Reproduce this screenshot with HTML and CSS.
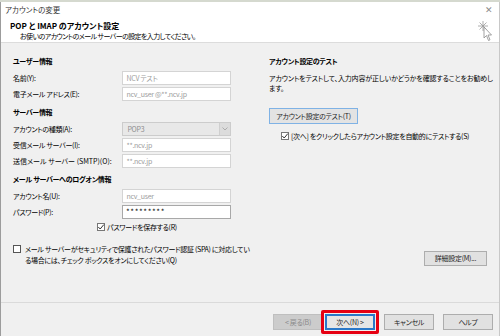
FILE: index.html
```html
<!DOCTYPE html>
<html lang="ja">
<head>
  <meta charset="UTF-8" />
  <meta name="viewport" content="width=device-width, initial-scale=1.0" />
  <title>アカウントの変更</title>
  <link rel="stylesheet" href="styles.css">
</head>
<body>
  <div class="window">
    <div class="titlebar">
      <span class="title">アカウントの変更</span>
      <span class="close">✕</span>
    </div>

    <div class="header">
      <div class="header-title">POP と IMAP のアカウント設定</div>
      <div class="header-sub">お使いのアカウントのメール サーバーの設定を入力してください。</div>
      <svg class="cursor" width="16" height="22" viewBox="0 0 16 22">
        <g stroke="#9a9a9a" stroke-width="0.8">
          <line x1="5" y1="0" x2="5" y2="10" />
          <line x1="0" y1="5" x2="10" y2="5" />
          <line x1="1.5" y1="1.5" x2="8.5" y2="8.5" />
          <line x1="8.5" y1="1.5" x2="1.5" y2="8.5" />
        </g>
        <path d="M6 6 L6 17 L8.5 14.5 L10.5 19.5 L12 18.8 L10 14 L13.5 14 Z" fill="#fff" stroke="#8a8a8a" stroke-width="0.8" />
      </svg>
    </div>

    <div class="content">
      <div class="col-left">
        <div class="group-title">ユーザー情報</div>
        <div class="row">
          <label>名前(Y):</label>
          <input class="field" type="text" value="NCV テスト" readonly>
        </div>
        <div class="row">
          <label>電子メール アドレス(E):</label>
          <input class="field" type="text" value="ncv_user @**.ncv.jp" readonly>
        </div>

        <div class="group-title">サーバー情報</div>
        <div class="row">
          <label>アカウントの種類(A):</label>
          <div class="select">
            <span>POP3</span>
            <span class="select-arrow">
              <svg width="6" height="4" viewBox="0 0 6 4"><path d="M0.5 0.5 L3 3 L5.5 0.5" fill="none" stroke="#a0a0a0" stroke-width="0.8" /></svg>
            </span>
          </div>
        </div>
        <div class="row">
          <label>受信メール サーバー(I):</label>
          <input class="field" type="text" value="**.ncv.jp" readonly>
        </div>
        <div class="row">
          <label class="wide">送信メール サーバー (SMTP)(O):</label>
          <input class="field" type="text" value="**.ncv.jp" readonly>
        </div>

        <div class="group-title">メール サーバーへのログオン情報</div>
        <div class="row">
          <label>アカウント名(U):</label>
          <input class="field" type="text" value="ncv_user" readonly>
        </div>
        <div class="row">
          <label>パスワード(P):</label>
          <input class="field field-pass" type="text" value="*********" readonly>
        </div>

        <div class="check-row check-save">
          <span class="checkbox checked">
            <svg width="8" height="8" viewBox="0 0 8 8"><path d="M1.3 4 L3.2 6 L6.8 1.6" fill="none" stroke="#333" stroke-width="1" /></svg>
          </span>
          <span>パスワードを保存する(R)</span>
        </div>

        <div class="check-row check-spa">
          <span class="checkbox"></span>
          <span>メール サーバーがセキュリティで保護されたパスワード認証 (SPA) に対応してい<br>る場合には、チェック ボックスをオンにしてください(Q)</span>
        </div>
      </div>

      <div class="col-right">
        <div class="group-title">アカウント設定のテスト</div>
        <p class="note">アカウントをテストして、入力内容が正しいかどうかを確認することをお勧めし<br>ます。</p>
        <div>
          <button class="btn btn-focus">アカウント設定のテスト(T)</button>
        </div>
        <div class="check-row check-auto">
          <span class="checkbox checked">
            <svg width="8" height="8" viewBox="0 0 8 8"><path d="M1.3 4 L3.2 6 L6.8 1.6" fill="none" stroke="#333" stroke-width="1" /></svg>
          </span>
          <span>[次へ] をクリックしたらアカウント設定を自動的にテストする(S)</span>
        </div>
        <div class="more">
          <button class="btn btn-more">詳細設定(M)...</button>
        </div>
      </div>
    </div>

    <div class="footer">
      <button class="btn btn-nav" disabled>&lt; 戻る(B)</button>
      <div class="highlight">
        <button class="btn btn-nav btn-default">次へ(N) &gt;</button>
      </div>
      <button class="btn btn-nav btn-cancel">キャンセル</button>
      <button class="btn btn-nav">ヘルプ</button>
    </div>
  </div>
</body>
</html>
```

FILE: styles.css
```css
body {
  margin: 0;
  background: #d5d9cf;
  font-family: "Noto Sans CJK JP", "Noto Sans", sans-serif;
  font-size: 8px;
  font-feature-settings: "palt";
  color: #000;
}
.window {
  margin-top: 2px;
  height: 334px;
  width: 498px;
  border-left: 1px solid #9c9c9c;
  border-right: 1px solid #c8c8c8;
  background: #f0f0f0;
  display: flex;
  flex-direction: column;
}
.titlebar {
  height: 16px;
  background: #fff;
  display: flex;
  align-items: center;
  justify-content: space-between;
  padding: 0 6px 0 4px;
}
.title {
  color: #333;
  font-size: 7.5px;
}
.close {
  color: #8a8a8a;
  font-size: 9px;
}
.header {
  position: relative;
  background: #fff;
  padding: 3px 0 0 9px;
  height: 22px;
  border-bottom: 1px solid #dcdcdc;
}
.header-title {
  font-weight: bold;
  line-height: 11px;
}
.header-sub {
  line-height: 11px;
  padding-left: 10px;
  font-size: 7px;
  letter-spacing: -0.6px;
}
.cursor {
  position: absolute;
  right: 5px;
  top: 4px;
}
.content {
  flex: 1;
  display: grid;
  grid-template-columns: 218px minmax(0, 1fr);
  gap: 38px;
  padding: 9px 10px 36px 12px;
  font-size: 7px;
  letter-spacing: -0.3px;
}
.col-left {
  display: flex;
  flex-direction: column;
  gap: 2px;
}
.group-title {
  font-weight: bold;
  height: 14px;
  line-height: 14px;
  margin: 2px 0 1px;
  white-space: nowrap;
}
.row {
  display: flex;
  align-items: center;
  height: 14px;
}
.row label {
  width: 110px;
  white-space: nowrap;
}
.row label.wide {
  letter-spacing: 0;
}
.field {
  box-sizing: border-box;
  width: 109px;
  height: 14px;
  margin: 0;
  padding: 0 3px;
  border: 1px solid #d4d4d4;
  background: #fff;
  font: inherit;
  letter-spacing: inherit;
  color: #9c9c9c;
  outline: none;
}
.field-pass {
  border-color: #a8a8a8;
  color: #111;
  letter-spacing: 0.6px;
  font-size: 8px;
}
.select {
  box-sizing: border-box;
  width: 109px;
  height: 14px;
  border: 1px solid #cccccc;
  background: #e8e8e8;
  color: #8e8e8e;
  display: flex;
  align-items: center;
  justify-content: space-between;
  padding-left: 4px;
}
.select-arrow {
  width: 10px;
  height: 12px;
  display: flex;
  align-items: center;
  justify-content: center;
  background: #dcdcdc;
  border-left: 1px solid #cfcfcf;
}
.check-row {
  display: flex;
  align-items: center;
  gap: 2px;
  white-space: nowrap;
}
.checkbox {
  box-sizing: border-box;
  width: 8px;
  height: 8px;
  border: 1px solid #555;
  background: #fff;
  display: flex;
  align-items: center;
  justify-content: center;
  flex: none;
}
.checkbox svg {
  margin: -1px;
}
.checkbox.checked {
  border-color: #777;
}
.check-save {
  height: 12px;
  padding-left: 84px;
}
.check-spa {
  margin-top: 9px;
  align-items: flex-start;
  line-height: 11px;
  gap: 4px;
}
.check-spa .checkbox {
  margin-top: 1px;
}
.col-right {
  display: flex;
  flex-direction: column;
}
.note {
  margin: 4px 0 15px;
  line-height: 10px;
  white-space: nowrap;
  letter-spacing: -0.15px;
}
.btn {
  box-sizing: border-box;
  height: 16px;
  margin: 0;
  padding: 0 4px;
  border: 1px solid #adadad;
  background: #e1e1e1;
  font: inherit;
  letter-spacing: inherit;
  color: #1e1e1e;
  white-space: nowrap;
}
.btn-focus {
  width: 89px;
  border-color: #7fb2e5;
  background: #e3e3e3;
}
.check-auto {
  margin: 6px 0 0 12px;
  height: 12px;
}
.more {
  margin-top: auto;
  text-align: right;
  padding-right: 2px;
}
.btn-more {
  width: 63px;
  height: 15px;
}
.footer {
  height: 36px;
  box-sizing: border-box;
  border-top: 1px solid #dadada;
  display: flex;
  align-items: flex-start;
  padding: 7px 6px 0 0;
  justify-content: flex-end;
  font-size: 7px;
  letter-spacing: -0.3px;
}
.btn-nav {
  width: 50px;
  margin-top: 4px;
  padding: 0;
}
.btn-nav:disabled {
  background: #cccccc;
  border-color: #bfbfbf;
  color: #8a8a8a;
  margin-right: -2px;
}
.highlight {
  border: 3px solid #e60012;
  border-radius: 2px;
  padding: 1px;
}
.highlight .btn-nav {
  margin-top: 0;
}
.btn-default {
  border: 2px solid #2a78c8;
  background: #e5e5e5;
}
.btn-cancel {
  margin: 4px 9px 0 5px;
}
```
